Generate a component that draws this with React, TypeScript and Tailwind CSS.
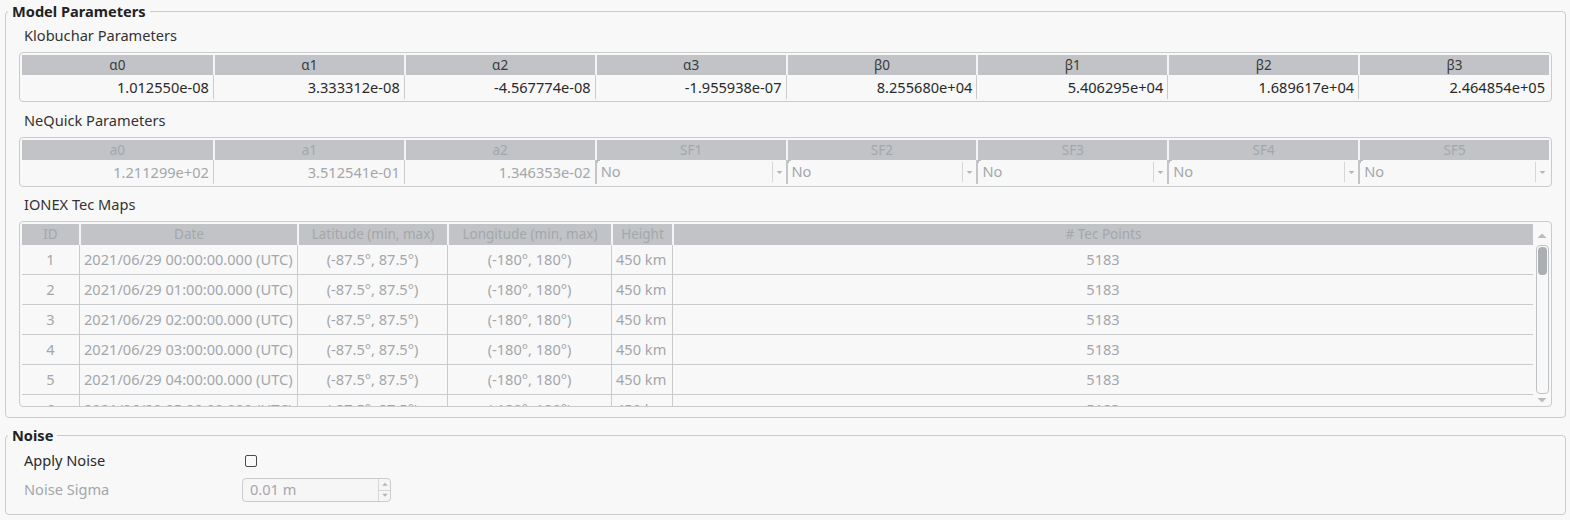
import React from "react";

const FONT = { fontFamily: '"Noto Sans", "Open Sans", sans-serif' };

const kloHeaders = ["α0", "α1", "α2", "α3", "β0", "β1", "β2", "β3"];
const kloValues = [
  "1.012550e-08",
  "3.333312e-08",
  "-4.567774e-08",
  "-1.955938e-07",
  "8.255680e+04",
  "5.406295e+04",
  "1.689617e+04",
  "2.464854e+05",
];

const neqHeaders = ["a0", "a1", "a2", "SF1", "SF2", "SF3", "SF4", "SF5"];
const neqValues = ["1.211299e+02", "3.512541e-01", "1.346353e-02"];

const rows = [1, 2, 3, 4, 5, 6].map((id) => ({
  id,
  date: `2021/06/29 0${id - 1}:00:00.000 (UTC)`,
}));

function ComboCell() {
  return (
    <div className="relative flex h-[24px] items-center border-l-2 border-[#c3c5c8]">
      <span className="pl-[4px] text-[#a3a7ab]">No</span>
      <div className="ml-auto flex h-full items-center">
        <div className="h-[20px] w-px bg-[#d4d6d8]" />
        <svg width="13" height="20" viewBox="0 0 13 20" className="block">
          <path d="M3.5 9 L9.5 9 L6.5 12 Z" fill="#b4b7ba" />
        </svg>
      </div>
      <span className="absolute left-0 top-0 h-[3px] w-[3px] border-l border-t border-[#b8babd]" />
    </div>
  );
}

function ScrollBar() {
  return (
    <div className="flex w-[18px] flex-col items-center">
      <svg width="14" height="18" viewBox="0 0 14 18" className="mt-[4px] block">
        <path d="M2.5 11 L11.5 11 L7 6.5 Z" fill="#b9bcbf" />
      </svg>
      <div className="relative h-[149px] w-[13px] rounded-[4px] border border-[#bfc2c5] bg-[#f8f8f8]">
        <div className="absolute left-[1px] top-[1px] h-[28px] w-[9px] rounded-[4px] bg-[#acafb2]" />
      </div>
      <svg width="14" height="12" viewBox="0 0 14 12" className="block">
        <path d="M2.5 4 L11.5 4 L7 8.5 Z" fill="#b9bcbf" />
      </svg>
    </div>
  );
}

export default function App() {
  const cols = "grid grid-cols-[57px_218px_150px_164px_61px_1fr]";
  return (
    <div
      className="h-[520px] w-[1570px] overflow-hidden bg-[#f8f8f8] text-[14.6px] text-[#333333]"
      style={FONT}
    >
      <div className="pl-[5px] pr-[4px]">
        {/* Model Parameters */}
        <fieldset className="rounded-[4px] border border-[#c9cbcd] px-[13px] pb-[10px]">
          <legend className="ml-[-11px] px-[4px] text-[14.6px] font-bold leading-[22px] text-[#222]">
            Model Parameters
          </legend>

          <div className="mt-[3px] pl-[5px] leading-[20px]">Klobuchar Parameters</div>
          <div className="mt-[7px] rounded-[4px] border border-[#c9cbcd] p-[2px]">
            <div className="grid grid-cols-8 bg-[#c1c3c6]">
              {kloHeaders.map((h, i) => (
                <div
                  key={h}
                  className={`h-[20px] text-center text-[13.5px] leading-[20px] text-[#3a3a3a] ${
                    i > 0 ? "border-l-2 border-[#f4f4f4]" : ""
                  }`}
                >
                  {h}
                </div>
              ))}
            </div>
            <div className="grid grid-cols-8">
              {kloValues.map((v, i) => (
                <div
                  key={i}
                  className={`h-[24px] pr-[4px] text-right leading-[24px] text-[#2a2a2a] ${
                    i > 0 ? "border-l border-[#c9cbcd]" : ""
                  }`}
                >
                  {v}
                </div>
              ))}
            </div>
          </div>

          <div className="mt-[8px] pl-[5px] leading-[20px]">NeQuick Parameters</div>
          <div className="mt-[7px] rounded-[4px] border border-[#c9cbcd] p-[2px]">
            <div className="grid grid-cols-8 bg-[#c1c3c6]">
              {neqHeaders.map((h, i) => (
                <div
                  key={h}
                  className={`h-[20px] text-center text-[13.5px] leading-[20px] text-[#a3a7ab] ${
                    i > 0 ? "border-l-2 border-[#f4f4f4]" : ""
                  }`}
                >
                  {h}
                </div>
              ))}
            </div>
            <div className="grid grid-cols-8">
              {neqValues.map((v, i) => (
                <div
                  key={i}
                  className={`h-[24px] pr-[4px] text-right leading-[24px] text-[#a3a7ab] ${
                    i > 0 ? "border-l border-[#c9cbcd]" : ""
                  }`}
                >
                  {v}
                </div>
              ))}
              {[0, 1, 2, 3, 4].map((i) => (
                <ComboCell key={i} />
              ))}
            </div>
          </div>

          <div className="mt-[7px] pl-[5px] leading-[20px]">IONEX Tec Maps</div>
          <div className="mt-[7px] flex rounded-[4px] border border-[#c9cbcd] pl-[1px] pt-[1px]">
            <div className="min-w-0 flex-1 pl-[1px] pt-[1px]">
              <div className={`${cols} bg-[#c1c3c6] text-[13.5px] text-[#a3a7ab]`}>
                {["ID", "Date", "Latitude (min, max)", "Longitude (min, max)", "Height", "# Tec Points"].map(
                  (h, i) => (
                    <div
                      key={h}
                      className={`h-[21px] text-center leading-[21px] ${
                        i > 0 ? "border-l-2 border-[#f4f4f4]" : ""
                      }`}
                    >
                      {h}
                    </div>
                  )
                )}
              </div>
              <div className="h-[161px] overflow-hidden text-[#a3a7ab]">
                {rows.map((r) => (
                  <div key={r.id} className={`${cols} h-[30px] border-b border-[#c9cbcd] leading-[29px]`}>
                    <div className="text-center">{r.id}</div>
                    <div className="whitespace-nowrap border-l border-[#c9cbcd] pl-[4px]">{r.date}</div>
                    <div className="border-l border-[#c9cbcd] text-center">(-87.5°, 87.5°)</div>
                    <div className="border-l border-[#c9cbcd] text-center">(-180°, 180°)</div>
                    <div className="border-l border-[#c9cbcd] pl-[4px]">450 km</div>
                    <div className="border-l border-[#c9cbcd] text-center">5183</div>
                  </div>
                ))}
              </div>
            </div>
            <ScrollBar />
          </div>
        </fieldset>

        {/* Noise */}
        <fieldset className="mt-[6px] rounded-[4px] border border-[#c9cbcd] px-[18px] pb-[12px]">
          <legend className="ml-[-16px] px-[4px] text-[14.6px] font-bold leading-[22px] text-[#222]">
            Noise
          </legend>
          <div className="mt-[5px] flex h-[20px] items-center">
            <div className="w-[218px] text-[#2a2a2a]">Apply Noise</div>
            <div className="ml-[3px] h-[12px] w-[12px] rounded-[2px] border border-[#4a4a4a] bg-[#fafafa]" />
          </div>
          <div className="mt-[7px] flex h-[24px] items-center">
            <div className="w-[218px] text-[#a3a7ab]">Noise Sigma</div>
            <div className="flex h-[24px] w-[149px] items-center rounded-[4px] border border-[#c9cbcd] bg-[#f6f6f6]">
              <span className="pl-[7px] text-[#a3a7ab]">0.01 m</span>
              <div className="ml-auto flex h-full w-[12px] flex-col border-l border-[#d4d6d8]">
                <svg width="12" height="11" viewBox="0 0 12 11" className="block">
                  <path d="M3 7 L9 7 L6 4 Z" fill="#b4b7ba" />
                </svg>
                <div className="h-px w-full bg-[#d4d6d8]" />
                <svg width="12" height="11" viewBox="0 0 12 11" className="block">
                  <path d="M3 4 L9 4 L6 7 Z" fill="#b4b7ba" />
                </svg>
              </div>
            </div>
          </div>
        </fieldset>
      </div>
    </div>
  );
}
